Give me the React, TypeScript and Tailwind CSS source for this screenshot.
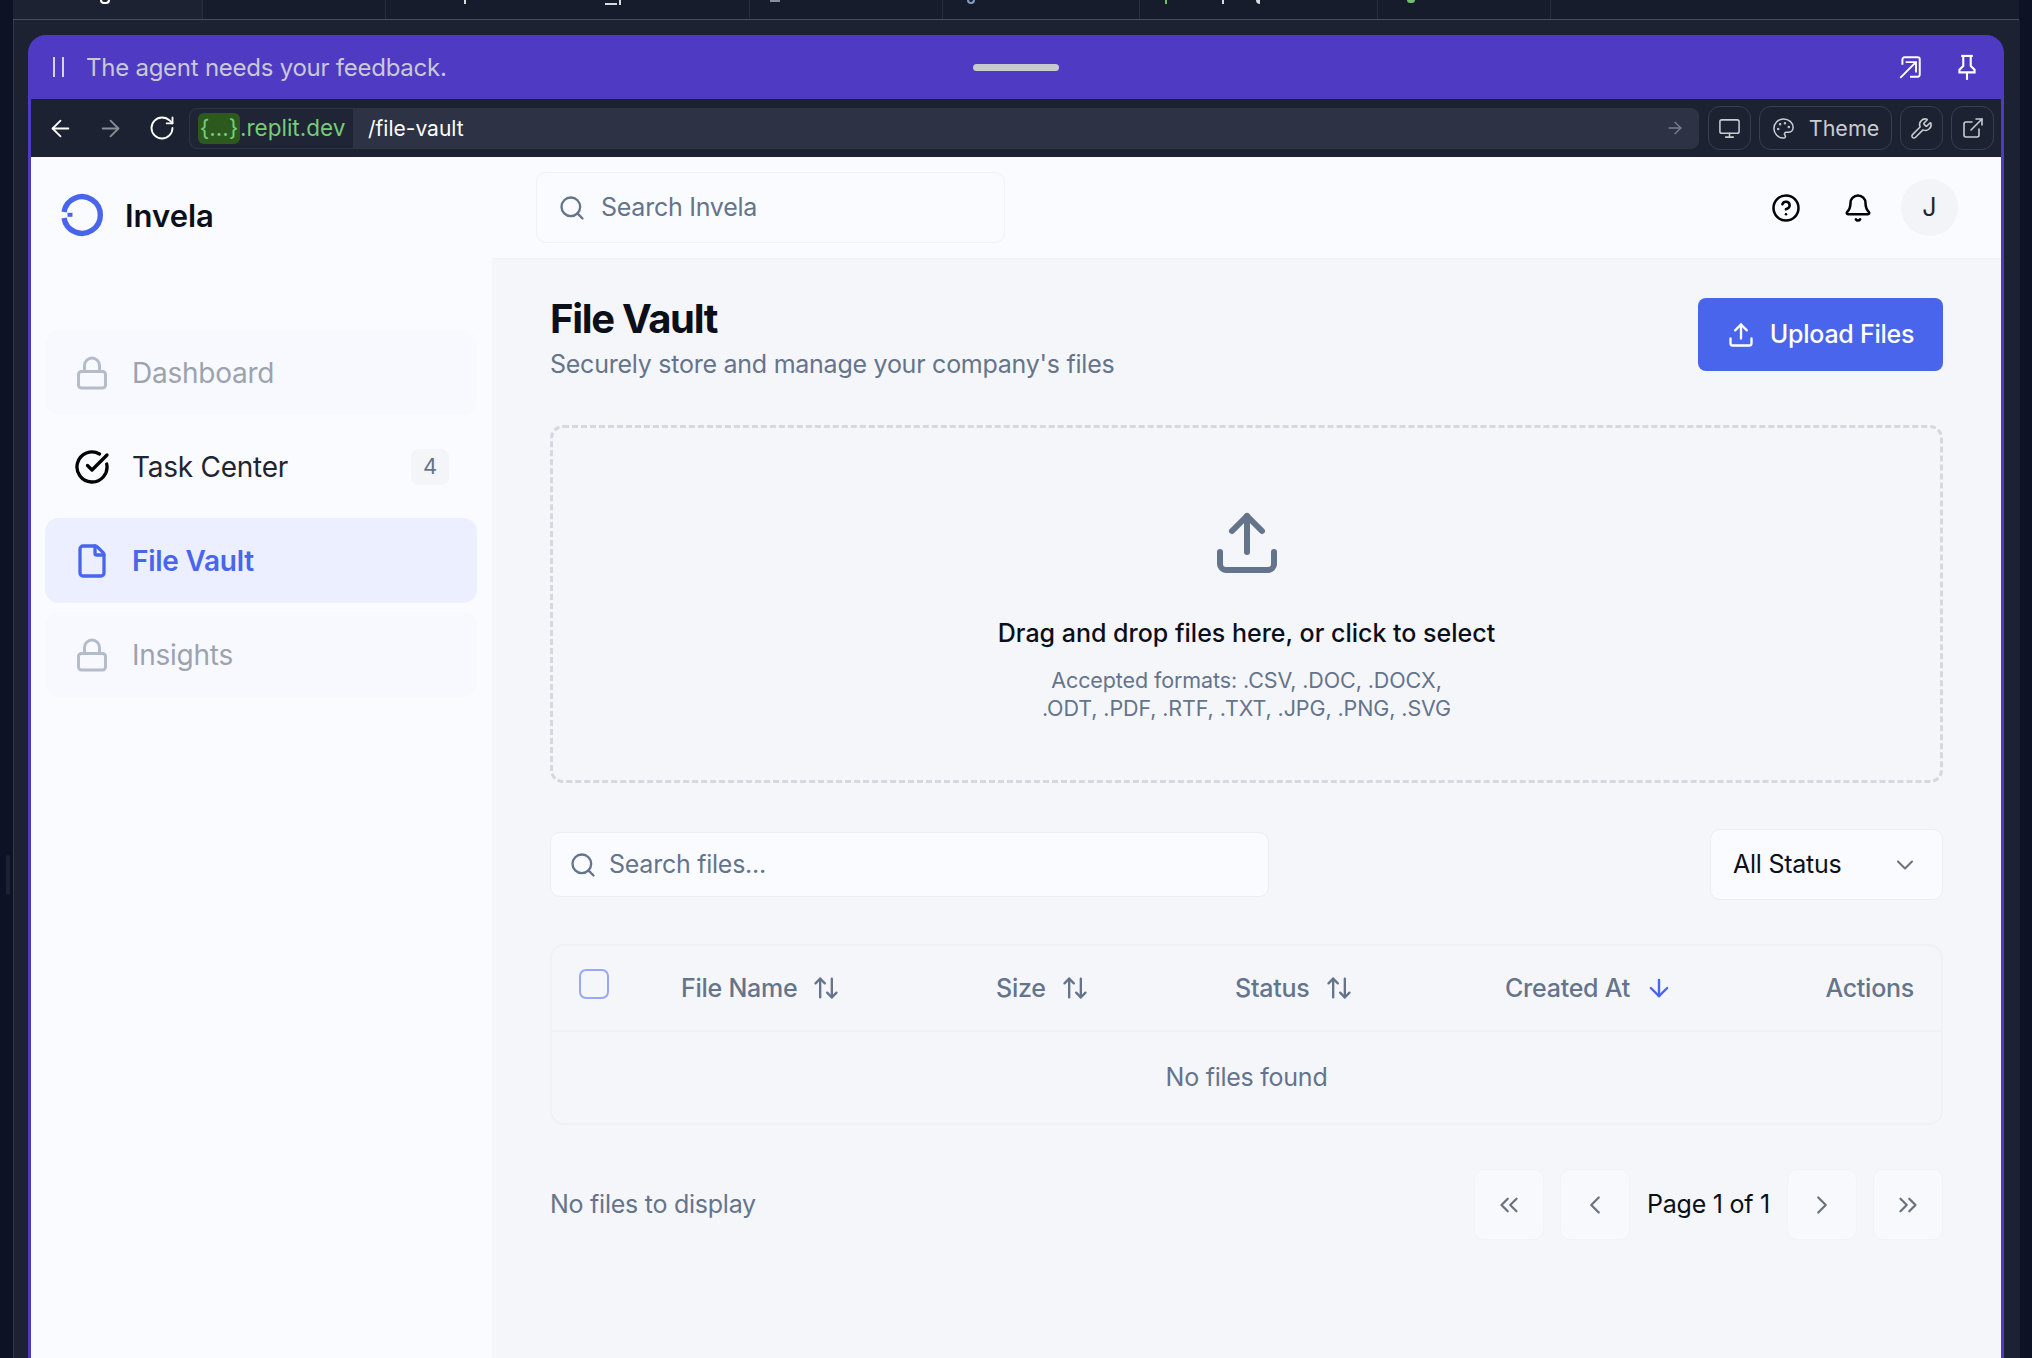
import { ArrowDown, ArrowLeft, ArrowRight, ArrowUpDown, Bell, ChevronDown, ChevronLeft, ChevronRight, ChevronsLeft, ChevronsRight, CircleCheckBig, CircleHelp, ExternalLink, File, Lock, Monitor, Palette, RotateCw, Search, Upload, Wrench } from "lucide-react";

// the tab labels are cut off by the top of the shot, only bits of descenders show
const tabs = [
  { w: "w-[190px]", bg: "bg-[#1c2231]", marks: ["absolute left-[87px] top-0 h-[4px] w-[10px] rounded-b-full border-x-2 border-b-2 border-white"] },
  { w: "w-[183px]", bg: "", marks: [] },
  {
    w: "w-[364px]",
    bg: "",
    marks: [
      "absolute left-[78px] top-0 h-[4px] w-[2px] bg-[#d8dae0]",
      "absolute left-[219px] top-[3px] h-[2px] w-[12px] bg-[#d8dae0]",
      "absolute left-[233px] top-0 h-[5px] w-[2px] bg-[#d8dae0]",
    ],
  },
  { w: "w-[193px]", bg: "", marks: ["absolute left-[20px] top-0 h-[2px] w-[10px] bg-[#8a8e98]"] },
  { w: "w-[197px]", bg: "", marks: ["absolute left-[24px] top-0 h-[4px] w-[8px] rounded-b-full border-x-2 border-b-2 border-[#7f9bc0]"] },
  {
    w: "w-[238px]",
    bg: "",
    marks: [
      "absolute left-[25px] top-0 h-[4px] w-[2px] bg-[#6fbf6f]",
      "absolute left-[82px] top-0 h-[4px] w-[2px] bg-[#d8dae0]",
      "absolute left-[116px] top-0 h-[4px] w-[4px] rounded-bl-full bg-[#d8dae0]",
    ],
  },
  { w: "w-[173px]", bg: "", marks: ["absolute left-[29px] top-0 h-[3px] w-[8px] rounded-b-full bg-[#6fbf6f]"] },
];

function Logo() {
  return (
    <svg width="46" height="46" viewBox="0 0 46 46" fill="none">
      <path d="M5 20A18.3 18.3 0 1 1 5 26" stroke="#4965ec" strokeWidth="5.4" />
      <rect x="8.5" y="20.8" width="5" height="4" fill="#4965ec" />
    </svg>
  );
}

function PopOutIcon() {
  return (
    <svg width="26" height="26" viewBox="0 0 24 24" fill="none" stroke="currentColor" strokeWidth="1.8">
      <path d="M5 10V5a2 2 0 0 1 2-2h12a2 2 0 0 1 2 2v14a2 2 0 0 1-2 2h-7" />
      <path d="M3 22 17 8" />
      <path d="M8 7.5h9.5V17" />
    </svg>
  );
}

function PinIcon() {
  return (
    <svg width="28" height="28" viewBox="0 0 24 24" fill="none" stroke="currentColor" strokeWidth="1.8">
      <path d="M7 2.5h10" />
      <path d="M8.8 2.5v8.7L5.5 14.4v2.2h13v-2.2l-3.3-3.2V2.5" />
      <path d="M12 16.6v6.4" />
    </svg>
  );
}

function NavItem({ label }: { label: string }) {
  return (
    <div className="flex h-[85px] items-center rounded-[14px] bg-[#f8f9fe] pl-[29px] text-[#9ca3af]">
      <Lock size={36} strokeWidth={2} className="text-[#b3bccb]" />
      <span className="ml-[22px] text-[28px] tracking-[-0.25px]">{label}</span>
    </div>
  );
}

function PageButton({ children }: { children: React.ReactNode }) {
  return (
    <div className="flex h-[71px] w-[70px] shrink-0 items-center justify-center rounded-[10px] border border-[#f2f3f7] bg-[#f8f9fd] text-[#6b7280]">
      {children}
    </div>
  );
}

function ToolButton({ children }: { children: React.ReactNode }) {
  return (
    <div className="flex h-[44px] w-[43px] items-center justify-center rounded-[12px] border border-[#3a3f50] text-[#c9ccd2]">
      {children}
    </div>
  );
}

function SortHead({ label, active }: { label: string; active?: boolean }) {
  return (
    <div className="flex items-center gap-[15px] text-[25px] font-medium tracking-[-0.25px] text-[#64748b]">
      <span className="pt-[1px]">{label}</span>
      {active ? <ArrowDown size={28} className="text-[#4965ec]" /> : <ArrowUpDown size={28} />}
    </div>
  );
}

export default function App() {
  return (
    <div className="flex h-[1358px] w-[2032px] flex-col overflow-hidden bg-[#0d1325] font-['Inter',sans-serif]">
      {/* browser tab strip */}
      <div className="flex h-[20px] shrink-0 pl-[13px] pr-[13px]">
        <div className="flex flex-1 border-b border-[#4a4e5c] bg-[#161c2b]">
          {tabs.map((t, i) => (
            <div key={i} className={`relative overflow-hidden border-r border-[#2a2f3d] ${t.w} ${t.bg}`}>
              {t.marks.map((m, j) => (
                <div key={j} className={m} />
              ))}
            </div>
          ))}
        </div>
      </div>

      <div className="flex min-h-0 flex-1">
        <div className="w-[13px] shrink-0 bg-[#0d1325] pt-[835px] pl-[6px]">
          <div className="h-[40px] w-[4px] rounded-full bg-[#1c2231]" />
        </div>
        <div className="flex min-w-0 flex-1 flex-col border-l border-[#333847] bg-[#1c2231] pt-[15px] pr-[16px] pl-[14px]">
          {/* agent banner */}
          <div className="flex h-[64px] shrink-0 items-center rounded-t-[18px] bg-[#4f3ac4] pr-[23px] pl-[25px]">
            <div className="flex h-[20px] gap-[7px]">
              <div className="w-[2px] bg-[#d5d3e8]" />
              <div className="w-[2px] bg-[#d5d3e8]" />
            </div>
            <span className="ml-[22px] pt-[2px] text-[24px] tracking-[-0.25px] text-[#c9c9d6]">The agent needs your feedback.</span>
            <div className="ml-[526px] h-[7px] w-[86px] rounded-full bg-[#c7cbd0]" />
            <div className="ml-auto flex items-center gap-[30px] text-white">
              <PopOutIcon />
              <PinIcon />
            </div>
          </div>

          <div className="flex min-h-0 flex-1 flex-col border-x-[3px] border-[#4f3ac4] bg-[#fafbff]">
            {/* replit toolbar */}
            <div className="flex h-[58px] shrink-0 items-center bg-[#1c2231] pr-[7px] pl-[16px]">
              <ArrowLeft size={27} strokeWidth={1.6} className="text-white" />
              <ArrowRight size={27} strokeWidth={1.6} className="ml-[23px] text-[#8a8d96]" />
              <RotateCw size={28} strokeWidth={1.6} className="ml-[24px] text-white" />
              <div className="ml-[13px] flex h-[41px] flex-1 items-center rounded-[8px] border border-[#2f3445] bg-[#2d3244]">
                <div className="flex h-full w-[164px] items-center rounded-l-[8px] border-r border-[#2f3445] bg-[#1f2535] pl-[8px] text-[22.5px] text-[#77cc77]">
                  <span className="flex h-[31px] w-[42px] items-center justify-center rounded-[6px] bg-[#2c5a1e]">{"{...}"}</span>
                  <span>.replit.dev</span>
                </div>
                <span className="ml-[14px] pt-[1px] text-[21px] text-white">/file-vault</span>
                <ArrowRight size={20} strokeWidth={1.6} className="ml-auto mr-[13px] text-[#7b7f8c]" />
              </div>
              <div className="ml-[9px] flex items-center gap-[8px]">
                <ToolButton><Monitor size={23} strokeWidth={1.6} /></ToolButton>
                <div className="flex h-[44px] w-[133px] items-center justify-center gap-[14px] rounded-[12px] border border-[#3a3f50] text-[21.5px] text-[#c9ccd2]">
                  <Palette size={23} strokeWidth={1.6} />
                  <span>Theme</span>
                </div>
                <ToolButton><Wrench size={23} strokeWidth={1.6} /></ToolButton>
                <ToolButton><ExternalLink size={24} strokeWidth={1.6} /></ToolButton>
              </div>
            </div>

            <div className="flex min-h-0 flex-1">
              {/* sidebar */}
              <aside className="flex w-[461px] shrink-0 flex-col bg-[#fafbff] pr-[15px] pl-[14px]">
                <div className="flex h-[173px] items-start pt-[35px] pl-[14px]">
                  <Logo />
                  <span className="ml-[20px] mt-[1px] text-[31px] font-semibold text-[#0b0f19]">Invela</span>
                </div>
                <div className="flex flex-col gap-[9px]">
                  <NavItem label="Dashboard" />
                  <div className="flex h-[85px] items-center rounded-[14px] pr-[28px] pl-[29px] text-[#1f2430]">
                    <CircleCheckBig size={36} strokeWidth={2.2} className="text-black" />
                    <span className="ml-[22px] text-[28px] tracking-[-0.25px]">Task Center</span>
                    <span className="ml-auto flex h-[36px] w-[38px] items-center justify-center rounded-[8px] bg-[#f3f5f9] text-[22px] text-[#64748b]">4</span>
                  </div>
                  <div className="flex h-[85px] items-center rounded-[14px] bg-[#ebefff] pl-[29px] text-[#4965ec]">
                    <File size={36} strokeWidth={2.2} />
                    <span className="ml-[22px] text-[28px] font-semibold tracking-[-0.25px]">File Vault</span>
                  </div>
                  <NavItem label="Insights" />
                </div>
              </aside>

              <div className="flex min-w-0 flex-1 flex-col bg-[#f5f6fa]">
                {/* top bar */}
                <header className="flex h-[102px] shrink-0 items-center border-b border-[#f0f1f5] bg-[#fafbff] pr-[43px] pl-[44px]">
                  <div className="flex h-[71px] w-[469px] items-center rounded-[10px] border border-[#f0f1f5] bg-[#fafbff] pl-[21px] text-[#64748b]">
                    <Search size={28} />
                    <span className="ml-[15px] pt-[1px] text-[25px] tracking-[-0.25px]">Search Invela</span>
                  </div>
                  <CircleHelp size={30} className="ml-auto text-black" />
                  <Bell size={30} className="ml-[42px] text-black" />
                  <div className="ml-[28px] flex h-[57px] w-[57px] items-center justify-center rounded-full bg-[#f3f4f7] text-[25px] text-[#1f2430]">J</div>
                </header>

                <main className="flex flex-1 flex-col px-[58px] pt-[39px]">
                  <div className="flex h-[73px] items-start justify-between">
                    <div>
                      <h1 className="text-[40px] leading-[42px] font-bold tracking-[-1.3px] text-[#0b0f19]">File Vault</h1>
                      <p className="mt-[6px] text-[25px] tracking-[-0.25px] text-[#64748b]">Securely store and manage your company's files</p>
                    </div>
                    <div className="flex h-[73px] w-[245px] items-center justify-center gap-[15px] rounded-[8px] bg-[#4965ec] text-[25px] font-medium tracking-[-0.25px] text-white">
                      <Upload size={28} />
                      <span>Upload Files</span>
                    </div>
                  </div>

                  {/* dropzone */}
                  <div className="mt-[54px] flex h-[358px] flex-col items-center rounded-[13px] border-[3px] border-dashed border-[#d5d8e0] pt-[79px]">
                    <Upload size={72} className="text-[#64748b]" />
                    <p className="mt-[36px] text-[25px] font-medium text-[#0b0f19]">Drag and drop files here, or click to select</p>
                    <p className="mt-[13px] text-center text-[21.5px] leading-[28px] tracking-[-0.1px] text-[#64748b]">
                      Accepted formats: .CSV, .DOC, .DOCX,<br />.ODT, .PDF, .RTF, .TXT, .JPG, .PNG, .SVG
                    </p>
                  </div>

                  {/* filters */}
                  <div className="mt-[46px] flex items-center justify-between">
                    <div className="flex h-[65px] w-[719px] items-center rounded-[10px] border border-[#eceef3] bg-[#fafbff] pl-[18px] text-[#64748b]">
                      <Search size={28} />
                      <span className="ml-[12px] pt-[1px] text-[25px] tracking-[-0.25px]">Search files...</span>
                    </div>
                    <div className="flex h-[71px] w-[233px] items-center justify-between rounded-[10px] border border-[#eceef3] bg-[#fafbff] pr-[23px] pl-[22px] text-[25px] tracking-[-0.25px] text-[#0b0f19]">
                      <span className="pt-[1px]">All Status</span>
                      <ChevronDown size={28} strokeWidth={1.8} className="text-[#6b7280]" />
                    </div>
                  </div>

                  {/* table */}
                  <div className="mt-[44px] h-[181px] rounded-[14px] border-2 border-[#f0f1f5]">
                    <div className="grid h-[86px] grid-cols-[102px_315px_239px_270px_1fr_auto] items-center border-b-2 border-[#f0f1f5] pr-[27px] pl-[27px]">
                      <div className="mb-[8px] h-[30px] w-[30px] rounded-[7px] border-2 border-[#98a8f6]" />
                      <SortHead label="File Name" />
                      <SortHead label="Size" />
                      <SortHead label="Status" />
                      <SortHead label="Created At" active />
                      <div className="pt-[1px] text-[25px] font-medium tracking-[-0.25px] text-[#64748b]">Actions</div>
                    </div>
                    <div className="flex h-[91px] items-center justify-center pt-[1px] text-[25px] tracking-[-0.25px] text-[#64748b]">No files found</div>
                  </div>

                  {/* pagination */}
                  <div className="mt-[44px] flex items-center">
                    <span className="pt-[1px] text-[25px] tracking-[-0.25px] text-[#64748b]">No files to display</span>
                    <div className="ml-auto flex items-center gap-[16px]">
                      <PageButton><ChevronsLeft size={30} strokeWidth={1.8} /></PageButton>
                      <PageButton><ChevronLeft size={30} strokeWidth={1.8} /></PageButton>
                      <span className="w-[125px] pt-[1px] text-center text-[25px] tracking-[-0.25px] text-[#0b0f19]">Page 1 of 1</span>
                      <PageButton><ChevronRight size={30} strokeWidth={1.8} /></PageButton>
                      <PageButton><ChevronsRight size={30} strokeWidth={1.8} /></PageButton>
                    </div>
                  </div>
                </main>
              </div>
            </div>
          </div>
        </div>
        <div className="w-[12px] shrink-0 bg-[#0d1325]" />
      </div>
    </div>
  );
}
